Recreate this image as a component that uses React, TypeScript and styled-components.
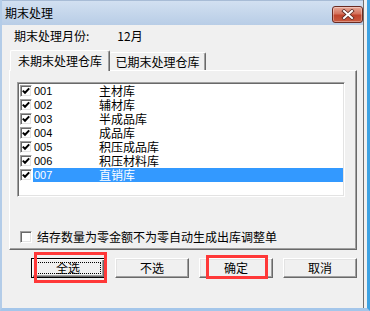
import { FC } from 'react';
import styled, { createGlobalStyle } from 'styled-components';

const GlobalStyle = createGlobalStyle`
  html, body {
    margin: 0;
    padding: 0;
    background: #f0f0f0;
  }

  body {
    font-family: 'Noto Sans CJK SC', 'Liberation Sans', sans-serif;
    font-size: 12px;
    color: #000;
  }

  * {
    box-sizing: border-box;
  }
`;

const Screen = styled.div`
  width: 370px;
  height: 311px;
  display: flex;
  overflow: hidden;
  background: #f0f0f0;
  border-left: 2px solid #b3cce8;
  border-bottom: 3px solid #a4c6ea;
  border-right: 3px solid #3ea2e2;
`;

const Window = styled.div`
  width: 362px;
  height: 100%;
  display: flex;
  flex-direction: column;
  border-right: 1px solid #6e6e6e;
`;

const TitleBar = styled.div`
  height: 25px;
  flex-shrink: 0;
  display: flex;
  align-items: center;
  justify-content: space-between;
  padding-left: 3px;
  background: linear-gradient(#d2e0f1, #b8cde6);
  border-top: 1px solid #a8bcd6;
`;

const Title = styled.span`
  line-height: 14px;
`;

const CloseButton = styled.div`
  width: 31px;
  height: 17px;
  margin-top: 3px;
  display: flex;
  align-items: center;
  justify-content: center;
  border: 1px solid #6a2b22;
  border-radius: 3px;
  background: linear-gradient(#e7a898 0%, #d4725c 45%, #c0442c 55%, #c95a3f 100%);
  box-shadow: inset 0 0 0 1px rgba(255, 255, 255, 0.35);
`;

const Body = styled.div`
  flex: 1;
  display: flex;
  flex-direction: column;
  padding: 0 6px 0 7px;
`;

const MonthRow = styled.div`
  margin-top: 4px;
  height: 14px;
  line-height: 14px;
  display: flex;
  padding-left: 5px;

  .value {
    margin-left: 28px;
  }
`;

const TabStrip = styled.div`
  margin-top: 7px;
  height: 20px;
  display: flex;
  align-items: flex-end;
  padding-left: 1px;
`;

const Tab = styled.div<{ $active?: boolean }>`
  position: relative;
  z-index: ${p => (p.$active ? 2 : 1)};
  width: ${p => (p.$active ? 100 : 96)}px;
  height: ${p => (p.$active ? 21 : 18)}px;
  margin-bottom: ${p => (p.$active ? -1 : 0)}px;
  display: flex;
  align-items: ${p => (p.$active ? 'flex-start' : 'center')};
  padding-top: ${p => (p.$active ? 3 : 0)}px;
  justify-content: center;
  line-height: 14px;
  background: #f0f0f0;
  border-top: 1px solid #fff;
  border-left: ${p => (p.$active ? '1px solid #fff' : 'none')};
  border-right: 1px solid #696969;
  box-shadow: inset -1px 0 #a0a0a0;
  border-radius: 2px 2px 0 0;
`;

const Panel = styled.div`
  height: 180px;
  display: flex;
  flex-direction: column;
  padding: 11px 0 0 7px;
  border-top: 1px solid #fff;
  border-left: 1px solid #fff;
  border-right: 1px solid #696969;
  border-bottom: 1px solid #696969;
  box-shadow: inset -1px -1px #a0a0a0;
`;

const ListBox = styled.div`
  width: 328px;
  height: 115px;
  padding: 1px;
  background: #fff;
  border: 1px solid;
  border-color: #a0a0a0 #fff #fff #a0a0a0;
  box-shadow: inset 1px 1px #696969, inset -1px -1px #e3e3e3;
`;

const Row = styled.div`
  height: 14px;
  display: flex;
  align-items: center;
`;

const Box = styled.div<{ $inList?: boolean }>`
  width: 12px;
  height: 12px;
  flex-shrink: 0;
  margin-left: ${p => (p.$inList ? 1 : 0)}px;
  display: flex;
  align-items: center;
  justify-content: center;
  background: #fff;
  border: 1px solid;
  border-color: #a0a0a0 #fff #fff #a0a0a0;
  box-shadow: inset 1px 1px #696969, inset -1px -1px #e3e3e3;
`;

const RowLabel = styled.div<{ $selected?: boolean }>`
  flex: 1;
  height: 14px;
  margin-left: 1px;
  padding-left: 1px;
  display: flex;
  align-items: center;
  line-height: 14px;
  color: ${p => (p.$selected ? '#fff' : '#000')};
  background: ${p => (p.$selected ? '#3399ff' : 'transparent')};
`;

const Code = styled.span`
  width: 65px;
  font-family: 'Liberation Sans', Arial, sans-serif;
  font-size: 11px;
`;

const CheckRow = styled.div`
  margin-top: 33px;
  height: 14px;
  display: flex;
  align-items: center;
  gap: 5px;
  padding-left: 3px;
  line-height: 14px;
`;

const ButtonRow = styled.div`
  margin-top: 8px;
  display: flex;
  gap: 10px;
  padding-left: 22px;
`;

const Button = styled.button<{ $default?: boolean }>`
  position: relative;
  width: 74px;
  height: 20px;
  padding: 0;
  font-family: inherit;
  font-size: 12px;
  line-height: 14px;
  color: #000;
  background: #f0f0f0;
  border: 1px solid;
  border-color: ${p => (p.$default ? '#000' : '#fff #696969 #696969 #fff')};
  box-shadow: ${p =>
    p.$default
      ? 'inset 1px 1px #fff, inset -1px -1px #696969, inset -2px -2px #a0a0a0'
      : 'inset -1px -1px #a0a0a0, inset 1px 1px #e3e3e3'};

  .focus {
    position: absolute;
    inset: 3px;
    border: 1px dotted #000;
  }
`;

const Mark = styled.div<{ $left: number; $top: number; $w: number; $h: number }>`
  position: absolute;
  left: ${p => p.$left}px;
  top: ${p => p.$top}px;
  width: ${p => p.$w}px;
  height: ${p => p.$h}px;
  border: 3px solid #ff3838;
  pointer-events: none;
`;

const CheckMark: FC = () => (
  <svg width='8' height='8' viewBox='0 0 8 8'>
    <path d='M0.8 3.6 L3 5.8 L7.2 1.4' fill='none' stroke='#000' strokeWidth='2' />
  </svg>
);

const CloseIcon: FC = () => (
  <svg width='14' height='11' viewBox='0 0 14 11'>
    <path d='M3 2 L11 9 M11 2 L3 9' stroke='#5a2a22' strokeWidth='3.6' strokeLinecap='square' />
    <path d='M3 2 L11 9 M11 2 L3 9' stroke='#fff' strokeWidth='2' strokeLinecap='square' />
  </svg>
);

const stores = [
  { code: '001', name: '主材库' },
  { code: '002', name: '辅材库' },
  { code: '003', name: '半成品库' },
  { code: '004', name: '成品库' },
  { code: '005', name: '积压成品库' },
  { code: '006', name: '积压材料库' },
  { code: '007', name: '直销库' },
];

const App: FC = () => (
  <>
    <GlobalStyle />
    <Screen>
      <Window>
        <TitleBar>
          <Title>期末处理</Title>
          <CloseButton>
            <CloseIcon />
          </CloseButton>
        </TitleBar>
        <Body>
          <MonthRow>
            <span>期末处理月份:</span>
            <span className='value'>12月</span>
          </MonthRow>
          <TabStrip>
            <Tab $active>未期末处理仓库</Tab>
            <Tab>已期末处理仓库</Tab>
          </TabStrip>
          <Panel>
            <ListBox>
              {stores.map(s => (
                <Row key={s.code}>
                  <Box $inList>
                    <CheckMark />
                  </Box>
                  <RowLabel $selected={s.code === '007'}>
                    <Code>{s.code}</Code>
                    <span>{s.name}</span>
                  </RowLabel>
                </Row>
              ))}
            </ListBox>
            <CheckRow>
              <Box />
              <span>结存数量为零金额不为零自动生成出库调整单</span>
            </CheckRow>
          </Panel>
          <ButtonRow>
            <Button $default>
              <span className='focus' />
              全选
              <Mark $left={2} $top={-7} $w={73} $h={31} />
            </Button>
            <Button>不选</Button>
            <Button>
              确定
              <Mark $left={6} $top={-4} $w={62} $h={24} />
            </Button>
            <Button>取消</Button>
          </ButtonRow>
        </Body>
      </Window>
    </Screen>
  </>
);

export default App;
